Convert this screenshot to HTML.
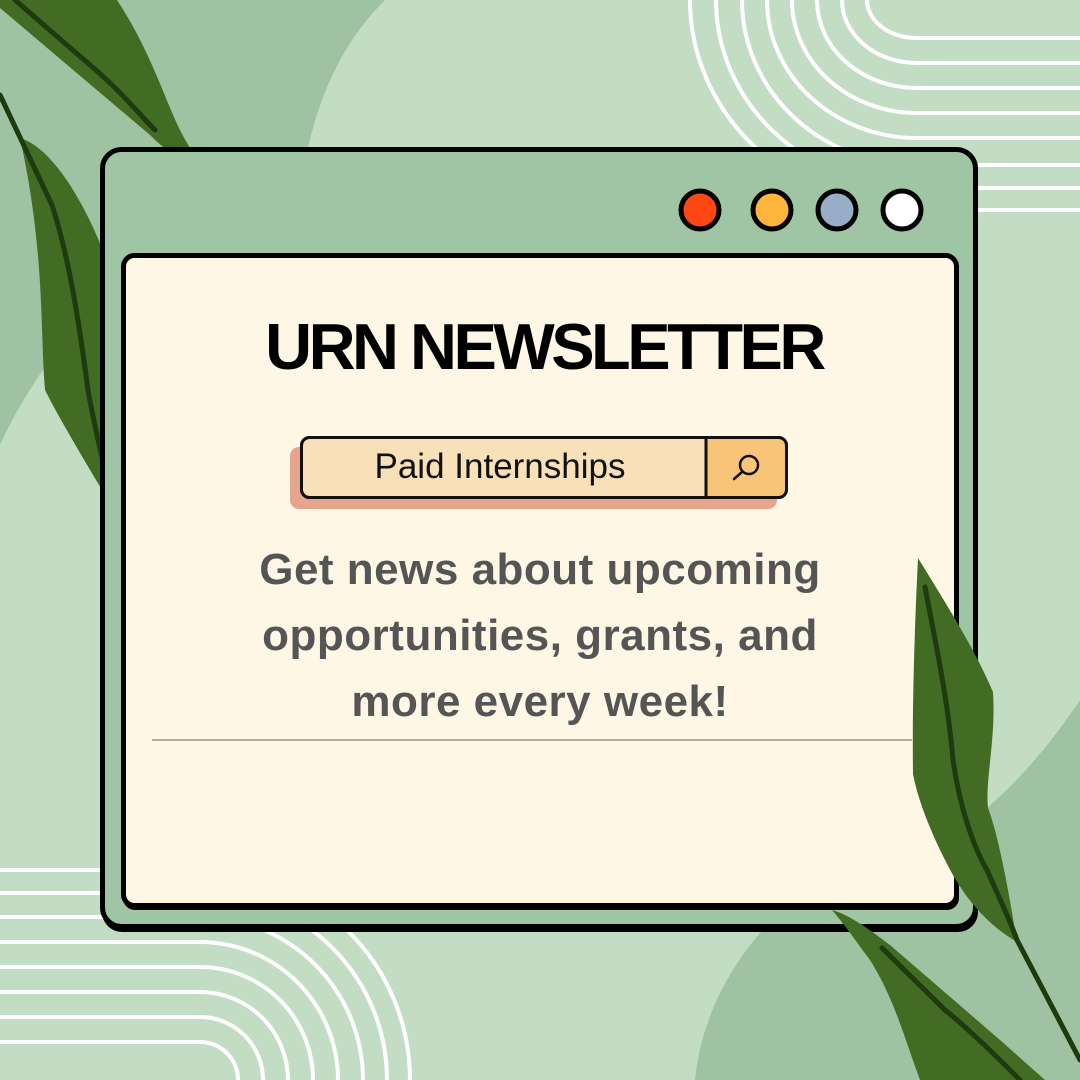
<!DOCTYPE html>
<html><head><meta charset="utf-8"><style>
html,body{margin:0;padding:0;width:1080px;height:1080px;overflow:hidden;background:#c3ddc5}
svg{position:absolute;left:0;top:0}
.t{position:absolute;left:0;width:1080px;text-align:center;font-family:"Liberation Sans",sans-serif}
</style></head><body>
<svg width="1080" height="1080" viewBox="0 0 1080 1080">
<rect width="1080" height="1080" fill="#c3ddc5"/>
<path d="M0,0 L385,0 C345,40 320,90 305,160 L100,300 C60,340 20,400 0,445Z" fill="#9fc3a2"/>
<path d="M1080,700 C1040,760 1000,800 960,830 L760,933 C720,980 700,1030 695,1080 L1080,1080Z" fill="#9fc3a2"/>
<g fill="none" stroke="#fff" stroke-width="4">
<path d="M867,0 A50,38 0 0 0 917,38 L1080,38"/>
<path d="M842,0 A75,63 0 0 0 917,63 L1080,63"/>
<path d="M817,0 A100,88 0 0 0 917,88 L1080,88"/>
<path d="M792,0 A125,113 0 0 0 917,113 L1080,113"/>
<path d="M767,0 A150,138 0 0 0 917,138 L1080,138"/>
<path d="M742,0 A175,165 0 0 0 917,165 L1080,165"/>
<path d="M716,0 A201,188 0 0 0 917,188 L1080,188"/>
<path d="M690,0 A227,210 0 0 0 917,210 L1080,210"/>
<path d="M0,870 L200,870 A210,210 0 0 1 410,1080"/>
<path d="M0,893 L200,893 A187,187 0 0 1 387,1080"/>
<path d="M0,917 L200,917 A163,163 0 0 1 363,1080"/>
<path d="M0,942 L200,942 A138,138 0 0 1 338,1080"/>
<path d="M0,967 L200,967 A113,113 0 0 1 313,1080"/>
<path d="M0,992 L200,992 A88,88 0 0 1 288,1080"/>
<path d="M0,1017 L200,1017 A63,63 0 0 1 263,1080"/>
<path d="M0,1042 L200,1042 A38,38 0 0 1 238,1080"/>
</g>
<path d="M0,8 L0,0 L117,0 C150,50 165,100 180,130 C190,150 198,160 205,170 C185,165 165,150 150,135 L0,8Z" fill="#426b24"/>
<path d="M15,0 L90,65 C120,90 140,115 155,130" fill="none" stroke="#1e3a0e" stroke-width="5" stroke-linecap="round"/>
<path d="M20,138 C60,150 100,230 120,300 L120,520 C90,470 60,420 45,390 C40,330 45,250 20,138Z" fill="#426b24"/>
<path d="M0,95 L52,205 C70,260 80,330 88,390 C95,430 105,470 110,492" fill="none" stroke="#1e3a0e" stroke-width="5" stroke-linecap="round"/>
<rect x="102" y="150" width="876" height="782" rx="20" fill="#000"/>
<rect x="102.5" y="149.5" width="873" height="777" rx="19" fill="#a0c5a4" stroke="#000" stroke-width="5"/>
<rect x="123" y="256" width="836" height="654" rx="12" fill="#000"/>
<rect x="123.5" y="255.5" width="833" height="650" rx="11" fill="#fff7e5" stroke="#000" stroke-width="5"/>
<circle cx="700" cy="210" r="19" fill="#ff4713" stroke="#000" stroke-width="5"/>
<circle cx="772" cy="210" r="19" fill="#ffb43b" stroke="#000" stroke-width="5"/>
<circle cx="837" cy="210" r="19" fill="#98adc8" stroke="#000" stroke-width="5"/>
<circle cx="902" cy="210" r="19" fill="#fff" stroke="#000" stroke-width="5"/>
<rect x="290" y="447" width="487" height="62" rx="9" fill="#e6a48e"/>
<rect x="301.5" y="437.5" width="485" height="60" rx="8" fill="#f8e0b8" stroke="#111" stroke-width="3"/>
<path d="M706,439 L778,439 Q785,439 785,446 L785,489 Q785,496 778,496 L706,496Z" fill="#f8c478"/>
<rect x="301.5" y="437.5" width="485" height="60" rx="8" fill="none" stroke="#111" stroke-width="3"/>
<line x1="706" y1="438" x2="706" y2="497" stroke="#111" stroke-width="3"/>
<circle cx="749" cy="465" r="9" fill="none" stroke="#111" stroke-width="2.5"/>
<line x1="742" y1="472" x2="734" y2="479" stroke="#111" stroke-width="2.5" stroke-linecap="round"/>
<line x1="152" y1="740" x2="912" y2="740" stroke="#b5ad9a" stroke-width="2"/>
<path d="M918,558 C950,610 975,650 993,692 C996,740 985,780 988,808 C1000,840 1010,900 1017,942 C980,920 960,890 945,860 C930,830 918,800 913,774 C912,700 915,620 918,558Z" fill="#426b24"/>
<path d="M925,587 C935,640 948,700 953,760 C960,810 975,850 987,870 C1000,900 1010,920 1017,940 L1080,1060" fill="none" stroke="#1e3a0e" stroke-width="5" stroke-linecap="round"/>
<path d="M832,910 C850,915 870,930 890,945 L1000,1040 L1045,1080 L920,1080 C905,1040 895,1000 870,960 C855,940 845,925 832,910Z" fill="#426b24"/>
<path d="M882,948 L945,1010 C970,1030 1000,1060 1020,1080" fill="none" stroke="#1e3a0e" stroke-width="5" stroke-linecap="round"/>
</svg>
<div class="t" style="top:302px;font-size:65px;font-weight:bold;letter-spacing:-3.5px;line-height:90px;color:#000;left:4px">URN NEWSLETTER</div>
<div class="t" style="top:443px;font-size:35px;line-height:48px;color:#111;left:-40px">Paid Internships</div>
<div class="t" style="top:537px;font-size:44px;font-weight:bold;line-height:66px;color:#555;letter-spacing:0.5px;left:0">Get news about upcoming<br>opportunities, grants, and<br>more every week!</div>
</body></html>
